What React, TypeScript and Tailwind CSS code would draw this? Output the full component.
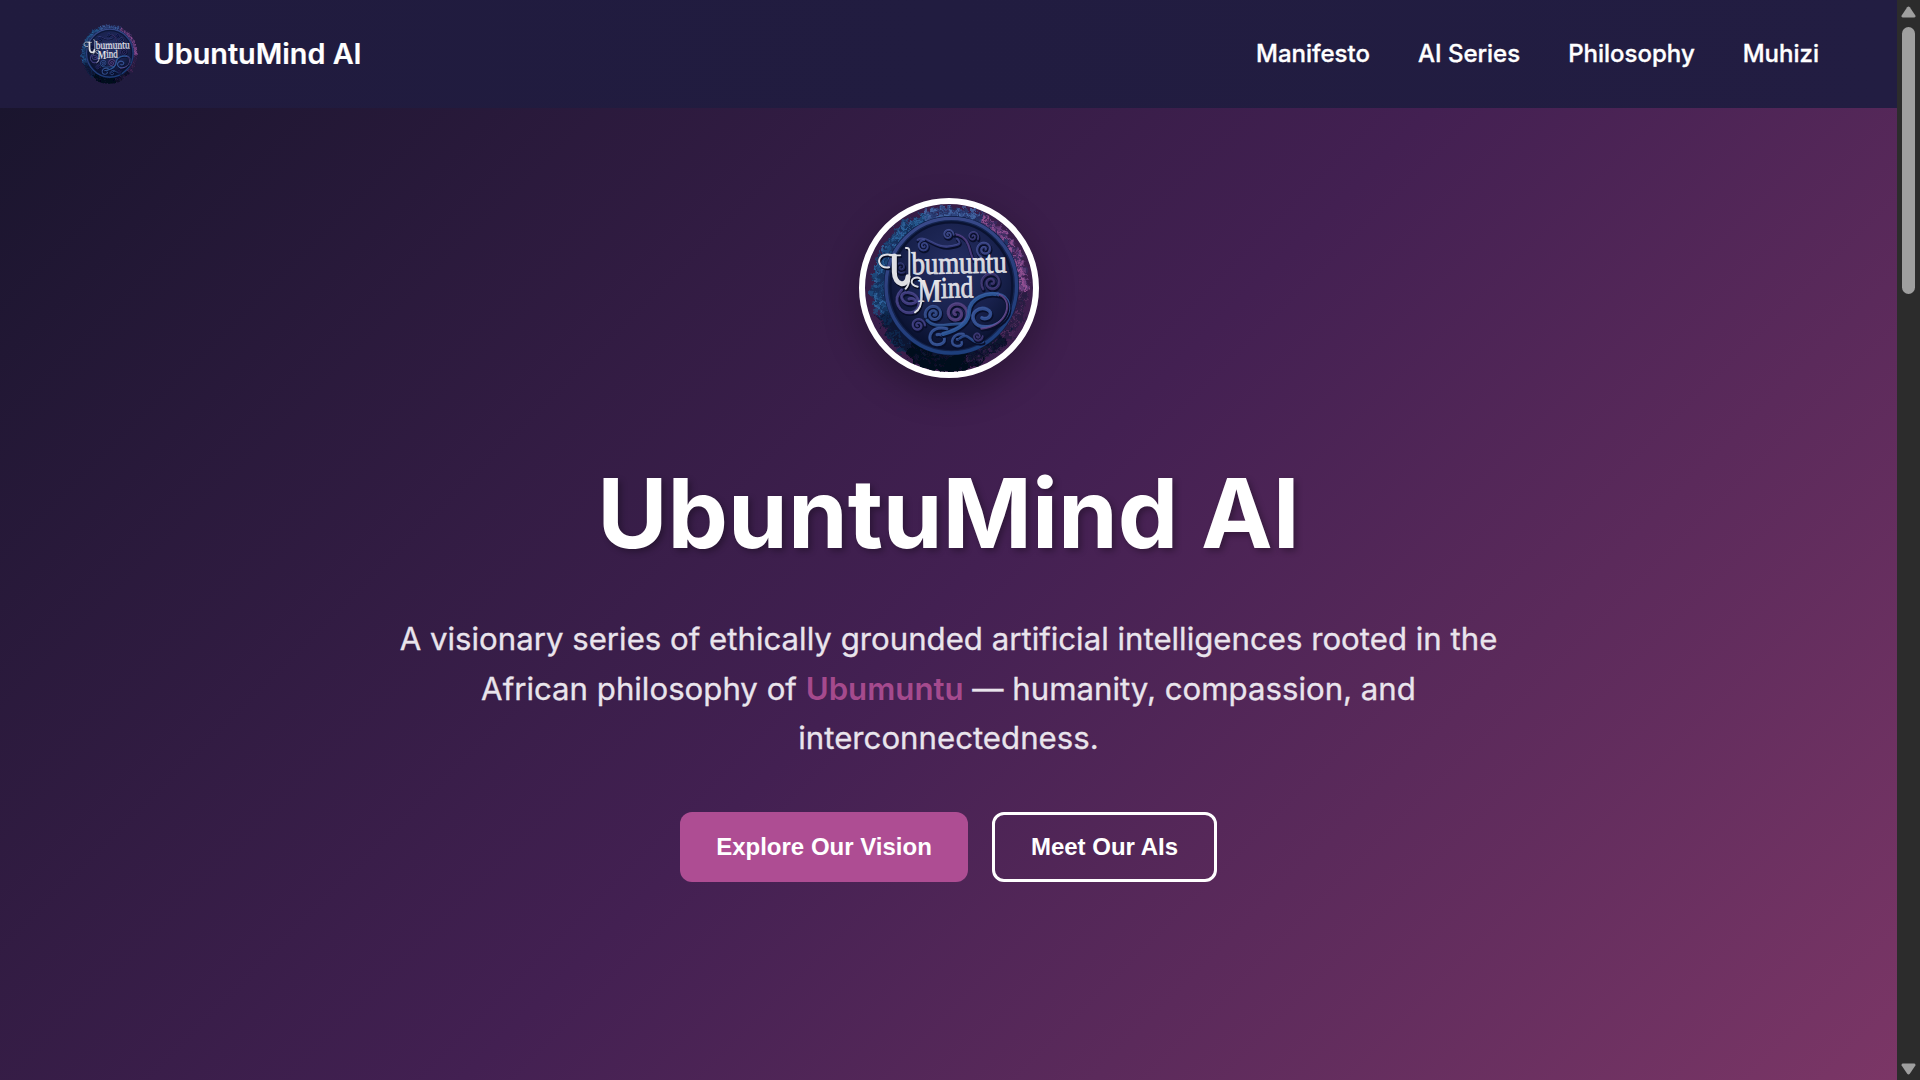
const NAV = ['Manifesto', 'AI Series', 'Philosophy', 'Muhizi'];

const TAU = Math.PI * 2;

type Tuft = { x: number; y: number; r: number; fill: string; opacity: number };

function noise(n: number) {
  const v = Math.sin(n * 127.1 + 311.7) * 43758.5453;
  return v - Math.floor(v);
}

// Mossy fringe around the medallion: blue on the left, pink top right, near black below.
const TUFTS: Tuft[] = Array.from({ length: 1500 }, (_, i) => {
  const a = noise(i) * TAU;
  const spread = 1 - i / 1500;
  const depth = 196 + spread * 42;
  const x = 330 + Math.cos(a) * depth * 0.98;
  const y = 324 + Math.sin(a) * depth * 1.02;
  const pick = noise(i + 9000);
  let fill: string;
  const deg = (a * 360) / TAU;
  if (deg > 295 || deg < 2) fill = pick > 0.65 ? '#9a5596' : pick > 0.3 ? '#6f4080' : '#3a2c5e';
  else if (deg < 40) fill = pick > 0.7 ? '#573060' : '#2a1d43';
  else if (deg < 75) fill = pick > 0.8 ? '#33214a' : '#12132e';
  else if (deg < 125) fill = pick > 0.8 ? '#0e1530' : '#070c20';
  else if (deg < 160) fill = pick > 0.6 ? '#12294f' : '#0b1734';
  else if (deg < 250) fill = pick > 0.7 ? '#2f659d' : pick > 0.3 ? '#204a7d' : '#15305c';
  else fill = pick > 0.7 ? '#4467a5' : pick > 0.3 ? '#304680' : '#232f60';
  return { x, y, r: 3 + noise(i + 2000) * 7 * (1.1 - spread * 0.5), fill, opacity: 0.85 };
});

function spiral(cx: number, cy: number, r: number, turns: number, start: number, dir: number) {
  const n = 40;
  let d = '';
  for (let i = 0; i <= n; i++) {
    const t = i / n;
    const a = start + dir * t * turns * TAU;
    const rad = r * (1 - t * 0.88);
    d += `${i ? 'L' : 'M'}${(cx + Math.cos(a) * rad).toFixed(1)} ${(cy + Math.sin(a) * rad).toFixed(1)}`;
  }
  return d;
}

const CURLS: { d: string; c: string; w: number }[] = [
  { d: 'M234 180C262 164 285 205 325 200S365 190 352 176', c: '#3f468f', w: 7 },
  { d: 'M326 164C350 160 376 166 386 195S392 222 402 240', c: '#58408c', w: 7 },
  { d: spiral(253, 198, 18, 1.7, -1.5, -1), c: '#3f4c96', w: 6 },
  { d: spiral(326, 164, 16, 1.7, 0, -1), c: '#434f98', w: 6 },
  { d: spiral(400, 170, 17, 1.5, 0.5, -1), c: '#413f82', w: 5 },
  { d: spiral(435, 208, 25, 1.7, 2, 1), c: '#45509a', w: 7 },
  { d: spiral(456, 308, 32, 1.8, 2.5, 1), c: '#46397a', w: 8 },
  { d: spiral(184, 262, 18, 1.5, 1, 1), c: '#2d3470', w: 6 },
  { d: 'M186 330C155 360 180 402 214 398S246 342 208 338S186 376 216 371S216 350 208 357', c: '#4f4894', w: 9 },
  { d: spiral(283, 402, 27, 1.8, 2.8, 1), c: '#3a589f', w: 9 },
  { d: spiral(350, 400, 37, 1.9, 1.6, -1), c: '#62488f', w: 10 },
  { d: spiral(235, 436, 21, 1.7, 0, -1), c: '#47438d', w: 7 },
  { d: 'M262 420C285 450 330 428 370 432', c: '#315da2', w: 9 },
  { d: 'M322 446C262 432 258 494 292 494S318 458 292 464', c: '#3d62ac', w: 9 },
  { d: 'M372 462C338 458 326 494 350 498S370 476 352 478', c: '#3b5ca6', w: 8 },
  { d: 'M310 462C360 448 388 428 388 395C390 355 440 335 475 343', c: '#366ab6', w: 12 },
  { d: 'M475 343C512 350 516 392 490 420C470 440 420 452 404 425S420 378 442 388S448 422 427 414', c: '#3f63b0', w: 11 },
  { d: 'M480 345C522 360 506 440 425 446', c: '#6c4a92', w: 6 },
  { d: 'M360 475C388 450 392 496 430 486', c: '#30569c', w: 8 },
  { d: spiral(414, 469, 15, 1.5, 0, 1), c: '#44397c', w: 6 },
];

function Emblem({ id, className }: { id: string; className: string }) {
  return (
    <svg viewBox="76 72 504 504" className={className} role="img" aria-label="Ubumuntu Mind">
      <defs>
        <linearGradient id={`${id}-rim`} x1="0.3" y1="0" x2="0.6" y2="1">
          <stop offset="0" stopColor="#3a4a8a" />
          <stop offset="0.5" stopColor="#2a3f7e" />
          <stop offset="1" stopColor="#1d3f7c" />
        </linearGradient>
        <radialGradient id={`${id}-plate`} cx="0.52" cy="0.35" r="0.62">
          <stop offset="0" stopColor="#252e62" />
          <stop offset="0.65" stopColor="#18214c" />
          <stop offset="1" stopColor="#0b1332" />
        </radialGradient>
        <linearGradient id={`${id}-base`} x1="0" y1="0" x2="0" y2="1">
          <stop offset="0" stopColor="#2b3c74" />
          <stop offset="0.5" stopColor="#152a56" />
          <stop offset="1" stopColor="#050a1c" />
        </linearGradient>
        <linearGradient id={`${id}-ink`} x1="0" y1="0" x2="0" y2="1">
          <stop offset="0" stopColor="#f3f2f3" />
          <stop offset="1" stopColor="#c4c6ce" />
        </linearGradient>
        <filter id={`${id}-moss`} x="-10%" y="-10%" width="120%" height="120%">
          <feTurbulence type="fractalNoise" baseFrequency="0.06" numOctaves="3" seed="7" />
          <feDisplacementMap in="SourceGraphic" scale="32" xChannelSelector="R" yChannelSelector="G" />
        </filter>
      </defs>
      <g filter={`url(#${id}-moss)`}>
        <ellipse cx="330" cy="328" rx="222" ry="232" fill={`url(#${id}-base)`} />
        <ellipse cx="325" cy="508" rx="125" ry="68" fill="#060a1b" />
        {TUFTS.map((t, i) => (
          <circle key={i} cx={t.x} cy={t.y} r={t.r} fill={t.fill} opacity={t.opacity} />
        ))}
      </g>
      <ellipse cx="335" cy="317" rx="203" ry="209" fill="#0c1b40" />
      <ellipse cx="335" cy="317" rx="196" ry="202" fill="#14234c" stroke={`url(#${id}-rim)`} strokeWidth="10" />
      <ellipse cx="335" cy="317" rx="183" ry="190" fill={`url(#${id}-plate)`} stroke="#0a1230" strokeWidth="7" />
      <g fill="none" strokeLinecap="round" strokeLinejoin="round">
        {CURLS.map((c, i) => (
          <g key={i}>
            <path d={c.d} transform="translate(2 4)" stroke="#080e29" strokeWidth={c.w + 3} />
            <path d={c.d} stroke={c.c} strokeWidth={c.w} strokeOpacity="0.75" />
            <path d={c.d} transform="translate(-1 -2)" stroke="#8292d0" strokeOpacity="0.25" strokeWidth="2" />
          </g>
        ))}
      </g>
      {[0, 1].map((layer) => (
        <g
          key={layer}
          aria-hidden={layer === 0}
          transform={layer ? undefined : 'translate(3 5)'}
          fill={layer ? `url(#${id}-ink)` : '#070b20'}
          stroke={layer ? '#dedfe4' : '#070b20'}
        >
          <g fill="none" strokeLinecap="round">
            <path d="M148 262C114 268 108 228 137 224C150 222 158 226 167 226" strokeWidth="6" />
            <path d="M150 226H182" strokeWidth="5" />
            <path d="M164 228V276C165 318 203 322 205 290" strokeWidth="15" />
            <path d="M199 204Q209 202 209 214V285Q210 315 198 326" strokeWidth="6" />
            <path d="M234 320C207 316 212 290 237 293C246 295 246 305 246 318V350C246 378 238 390 226 397" strokeWidth="6" />
          </g>
          {layer === 1 && (
            <g fontFamily="'Liberation Serif', serif" strokeWidth="2">
              <text transform="translate(216 283) rotate(-1.2) scale(1 1.25)" fontSize="76" textLength="286" lengthAdjust="spacingAndGlyphs">bumuntu</text>
              <text x="234" y="366" fontSize="104" fontWeight="700" strokeWidth="0" textLength="72" lengthAdjust="spacingAndGlyphs">M</text>
              <text transform="translate(304 354) rotate(-1.2) scale(1 1.2)" fontSize="76" textLength="98" lengthAdjust="spacingAndGlyphs">ind</text>
            </g>
          )}
        </g>
      ))}
    </svg>
  );
}

function Scrollbar() {
  return (
    <div className="flex h-full w-[23px] shrink-0 flex-col items-center justify-between bg-[#2c2c2c] pt-[6px] pb-[5px]">
      <div className="flex flex-col items-center gap-[9px]">
        <svg width="15" height="12" viewBox="0 0 15 12" fill="#9f9f9f">
          <path d="M6.2 1.2Q7.5-.2 8.8 1.2L14.4 9.6Q14.7 11.5 13 11.5H2Q.3 11.5.6 9.6Z" />
        </svg>
        <div className="h-[267px] w-[13px] rounded-full bg-[#9f9f9f]" />
      </div>
      <svg width="15" height="12" viewBox="0 0 15 12" fill="#9f9f9f">
        <path d="M6.2 10.8Q7.5 12.2 8.8 10.8L14.4 2.4Q14.7.5 13 .5H2Q.3.5.6 2.4Z" />
      </svg>
    </div>
  );
}

export default function App() {
  return (
    <div className="flex h-[1080px] w-full overflow-hidden font-['Inter',sans-serif]">
      <div className="flex h-full min-w-0 flex-1 flex-col text-white">
        <header className="flex h-[108px] shrink-0 items-center justify-between bg-linear-to-r from-[#201b3e] to-[#221d42] pr-[78px] pl-[79px]">
          <div className="flex items-center gap-[14.5px]">
            <Emblem id="nav" className="size-[60px] rounded-full" />
            <span className="text-[28.8px] font-semibold [-webkit-text-stroke:0.2px_white]">UbuntuMind AI</span>
          </div>
          <nav className="flex gap-12 text-2xl font-medium [-webkit-text-stroke:0.35px_white]">
            {NAV.map((n) => (
              <a key={n} href="#">{n}</a>
            ))}
          </nav>
        </header>
        <main className="flex flex-1 flex-col items-center bg-linear-135 from-[#1a152e] via-[#432052] to-[#7b3666] pt-[90px]">
          <div className="size-[180px] rounded-full border-[6px] border-white shadow-[0_12px_36px_rgba(0,0,0,0.3)]">
            <Emblem id="hero" className="size-full rounded-full" />
          </div>
          <h1 className="mt-[78px] text-[96px] leading-[115px] font-bold text-shadow-[3px_3px_6px_rgba(0,0,0,0.3)]">UbuntuMind AI</h1>
          <p className="mt-[44px] w-[1200px] text-center text-[31.2px] leading-[49.6px] text-[#e9e4ec] [-webkit-text-stroke:0.3px_#e9e4ec]">
            A visionary series of ethically grounded artificial intelligences rooted in the African philosophy of{' '}
            <span className="font-semibold text-[#a54a8d] [-webkit-text-stroke:0px]">Ubumuntu</span> — humanity, compassion, and interconnectedness.
          </p>
          <div className="mt-12 flex gap-6 font-['Liberation_Sans',sans-serif] text-2xl font-bold">
            <button className="h-[70px] w-[288px] rounded-xl bg-[#ae4d93]">Explore Our Vision</button>
            <button className="h-[70px] w-[225px] rounded-xl border-[3px] border-white">Meet Our AIs</button>
          </div>
        </main>
      </div>
      <Scrollbar />
    </div>
  );
}
